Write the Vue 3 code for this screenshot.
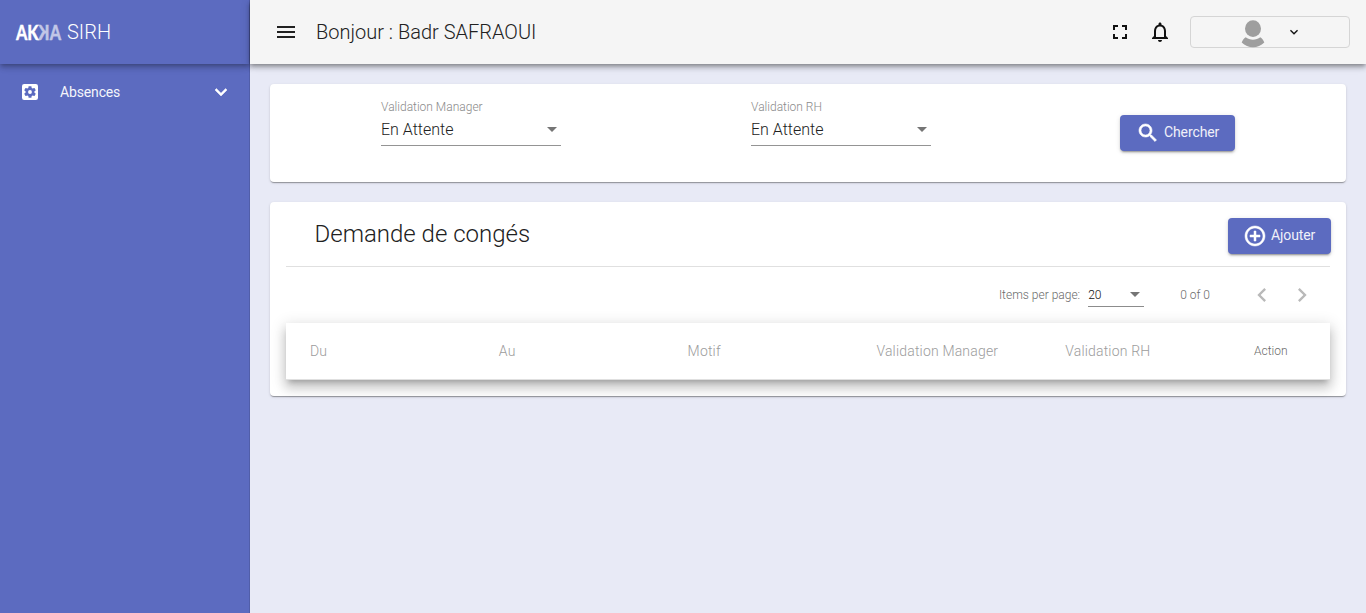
<script setup>
const filters = [
  { label: 'Validation Manager', value: 'En Attente' },
  { label: 'Validation RH', value: 'En Attente' },
]
const columns = ['Du', 'Au', 'Motif', 'Validation Manager', 'Validation RH', 'Action']
</script>

<template>
  <div class="app">
    <aside class="sidebar">
      <div class="brand">
        <span class="logo"><b>A</b><b>K</b><b class="faded flip">K</b><b class="faded">A</b></span>
        <span class="brand-name">SIRH</span>
      </div>
      <nav class="nav-item">
        <svg class="nav-icon" width="20" height="20" viewBox="0 0 24 24" fill="#fff">
          <rect x="2.400" y="2.400" width="19.200" height="19.200" rx="2.600" />
          <path fill="#5c6bc0" d="M17.250 12c0 .23-.02.46-.05.68l1.480 1.160c.13.11.17.3.08.45l-1.400 2.420c-.09.15-.27.21-.43.15l-1.740-.7c-.36.28-.76.51-1.180.69l-.26 1.850c-.03.17-.18.3-.35.3h-2.800c-.17 0-.32-.13-.35-.29l-.26-1.850c-.43-.18-.82-.41-1.180-.69l-1.740.7c-.16.06-.34 0-.43-.15l-1.400-2.420c-.09-.15-.05-.34.08-.45l1.480-1.160c-.03-.23-.05-.46-.05-.69s.02-.46.05-.68l-1.480-1.160c-.13-.11-.17-.3-.08-.45l1.400-2.420c.09-.15.27-.21.43-.15l1.740.7c.36-.28.76-.51 1.180-.69l.26-1.850c.03-.17.18-.3.35-.3h2.800c.17 0 .32.13.35.29l.26 1.850c.43.18.82.41 1.180.69l1.740-.7c.16-.06.34 0 .43.15l1.400 2.420c.09.15.05.34-.08.45l-1.480 1.160c.03.23.05.46.05.69z" />
          <circle cx="12" cy="12" r="2.300" />
        </svg>
        <span class="nav-label">Absences</span>
        <svg class="nav-chevron" width="24" height="24" viewBox="0 0 24 24" fill="#fff"><path d="M7.410 8.590L12 13.170l4.590-4.580L18 10l-6 6-6-6z" stroke="#fff" stroke-width=".5" /></svg>
      </nav>
    </aside>

    <div class="content">
      <header class="toolbar">
        <svg width="24" height="24" viewBox="0 0 24 24" fill="#212121"><path d="M3 18h18v-2H3v2zm0-5h18v-2H3v2zm0-7v2h18V6H3z" /></svg>
        <span class="greeting">Bonjour : Badr SAFRAOUI</span>
        <svg class="fullscreen" width="24" height="24" viewBox="0 0 24 24" fill="#111"><path d="M7 14H5v5h5v-2H7v-3zm-2-4h2V7h3V5H5v5zm12 7h-3v2h5v-5h-2v3zM14 5v2h3v3h2V5h-5z" /></svg>
        <svg class="bell" width="24" height="24" viewBox="0 0 24 24" fill="#111"><path d="M12 22c1.100 0 2-.9 2-2h-4c0 1.100.9 2 2 2zm6-6v-5c0-3.070-1.630-5.640-4.500-6.320V4c0-.83-.67-1.500-1.500-1.500s-1.500.67-1.500 1.500v.68C7.640 5.360 6 7.920 6 11v5l-2 2v1h16v-1l-2-2zm-2 1H8v-6c0-2.480 1.510-4.500 4-4.500s4 2.020 4 4.500v6z" /></svg>
        <button class="profile">
          <svg class="avatar" width="24" height="28" viewBox="0 0 24 28" fill="#9e9e9e">
            <ellipse cx="12" cy="8.600" rx="8" ry="8.400" />
            <path d="M4.700 17.200C8.600 20.500 15.400 20.500 19.300 17.200C21.200 18.500 22.500 20.200 23.300 22.400C17.200 28.700 6.800 28.700 .7 22.400C1.500 20.200 2.800 18.500 4.700 17.200z" />
          </svg>
          <svg class="caret" width="16" height="16" viewBox="0 0 24 24" fill="#111"><path d="M7.410 8.590L12 13.170l4.590-4.580L18 10l-6 6-6-6z" /></svg>
        </button>
      </header>

      <main class="main">
        <section class="card filters">
          <div v-for="f in filters" :key="f.label" class="field">
            <span class="field-label">{{ f.label }}</span>
            <div class="select"><span>{{ f.value }}</span><i class="arrow"></i></div>
          </div>
          <button class="btn search">
            <svg width="24" height="24" viewBox="0 0 24 24" fill="#fff"><path d="M15.500 14h-.79l-.28-.27C15.410 12.590 16 11.110 16 9.500 16 5.910 13.090 3 9.500 3S3 5.910 3 9.500 5.910 16 9.500 16c1.610 0 3.090-.59 4.230-1.570l.27.28v.79l5 4.990L20.490 19l-4.990-5zm-6 0C7.010 14 5 11.990 5 9.500S7.010 5 9.500 5 14 7.010 14 9.500 11.990 14 9.500 14z" stroke="#fff" stroke-width=".6" /></svg>
            <span>Chercher</span>
          </button>
        </section>

        <section class="card list">
          <div class="list-head">
            <h1>Demande de congés</h1>
            <button class="btn add">
              <svg width="24" height="24" viewBox="0 0 24 24" fill="#fff"><path d="M13 7h-2v4H7v2h4v4h2v-4h4v-2h-4V7zm-1-5C6.480 2 2 6.480 2 12s4.480 10 10 10 10-4.480 10-10S17.520 2 12 2zm0 18c-4.410 0-8-3.590-8-8s3.590-8 8-8 8 3.590 8 8-3.590 8-8 8z" stroke="#fff" stroke-width=".5" /></svg>
              <span>Ajouter</span>
            </button>
          </div>
          <div class="paginator">
            <span class="per-page">Items per page:</span>
            <div class="page-size"><span>20</span><i class="arrow"></i></div>
            <span class="range">0 of 0</span>
            <svg class="prev" width="28" height="28" viewBox="0 0 24 24" fill="#b9b9b9"><path d="M15.410 7.410L14 6l-6 6 6 6 1.410-1.410L10.830 12z" /></svg>
            <svg class="next" width="28" height="28" viewBox="0 0 24 24" fill="#b9b9b9"><path d="M10 6L8.590 7.410 13.170 12l-4.580 4.590L10 18l6-6z" /></svg>
          </div>
          <div class="table-head">
            <span v-for="c in columns" :key="c" :class="{ action: c === 'Action' }">{{ c }}</span>
          </div>
        </section>
      </main>
    </div>
  </div>
</template>

<style>
body { margin: 0; background: #e8eaf6; }
</style>

<style scoped>
* { box-sizing: border-box; }
.app {
  display: flex;
  height: 613px;
  overflow: hidden;
  font-family: Roboto, "Liberation Sans", sans-serif;
  font-weight: 300;
  color: #212121;
}
svg { display: block; flex: none; }
button { font: inherit; }
.sidebar {
  width: 250px;
  flex: none;
  background: #5c6bc0;
  border-right: 1px solid #515ea9;
  color: #fff;
}
.brand {
  display: flex;
  align-items: center;
  height: 64px;
  padding-left: 16px;
  box-shadow: 0 2px 4px -1px rgba(0,0,0,.2), 0 4px 5px rgba(0,0,0,.14), 0 1px 10px rgba(0,0,0,.12);
  font-size: 20px;
}
.logo {
  display: flex;
  width: 51px;
  font: 900 21px/24px Lato, sans-serif;
  transform: scaleX(.77);
  transform-origin: left;
}
.logo b { font-weight: 900; -webkit-text-stroke: .3px currentColor; }
.faded { opacity: .62; }
.flip { transform: scaleX(-1); }
.nav-item {
  display: flex;
  align-items: center;
  height: 56px;
  padding: 0 16px 0 20px;
  font-size: 14px;
  font-weight: 400;
}
.nav-label { margin-left: 20px; flex: 1; letter-spacing: -.15px; color: #f4f5fb; }
.content { flex: 1; min-width: 0; }
.toolbar {
  display: flex;
  align-items: center;
  height: 64px;
  padding: 0 16px 0 24px;
  background: #f5f5f5;
  box-shadow: 0 2px 4px -1px rgba(0,0,0,.3), 0 4px 5px rgba(0,0,0,.18), 0 1px 10px rgba(0,0,0,.12);
  font-size: 20px;
}
.greeting { margin-left: 18px; }
.fullscreen { margin-left: auto; }
.bell { margin: 0 18px 0 16px; }
.profile {
  display: flex;
  align-items: center;
  width: 160px;
  height: 32px;
  padding: 0 0 0 50px;
  border: 1px solid #d5d5d5;
  border-radius: 4px;
  background: transparent;
}
.avatar { margin-top: 3px; }
.caret { margin-left: 21px; }
.main { padding: 20px; display: grid; gap: 20px; }
.card {
  background: #fff;
  border-radius: 4px;
  box-shadow: 0 2px 1px -1px rgba(0,0,0,.2), 0 1px 1px rgba(0,0,0,.14), 0 1px 3px rgba(0,0,0,.12);
}
.filters {
  display: grid;
  grid-template-columns: 370px 369px auto;
  justify-items: start;
  align-items: start;
  height: 98px;
  padding-left: 111px;
}
.field { width: 180px; padding-top: 15px; }
.field-label { display: block; font-size: 12px; line-height: 16px; color: #8a8a8a; }
.select {
  display: flex;
  align-items: center;
  justify-content: space-between;
  height: 31px;
  padding: 0 4px 1px 0;
  border-bottom: 1px solid #949494;
  font-size: 16px;
}
.arrow {
  border: 5px solid transparent;
  border-top-color: #757575;
  border-bottom: 0;
}
.btn {
  display: flex;
  align-items: center;
  height: 36px;
  border: 0;
  border-radius: 4px;
  background: #5c6bc0;
  color: #fff;
  font-size: 14px;
  font-weight: 400;
  box-shadow: 0 3px 1px -2px rgba(0,0,0,.2), 0 2px 2px rgba(0,0,0,.14), 0 1px 5px rgba(0,0,0,.12);
}
.btn span { margin-top: -3px; letter-spacing: -.1px; color: #f0f1f9; }
.search { width: 115px; margin-top: 31px; padding: 0 0 0 16px; gap: 4px; }
.add { width: 103px; margin-right: -1px; padding: 0 0 0 15px; gap: 4px; }
.list { height: 194px; padding: 16px; }
.list-head {
  display: flex;
  justify-content: space-between;
  height: 49px;
  border-bottom: 1px solid #e0e0e0;
}
h1 { margin: 0 0 0 28.500px; font-size: 24px; line-height: 32px; font-weight: 300; }
.paginator {
  display: flex;
  align-items: center;
  height: 56px;
  padding-right: 14px;
  justify-content: flex-end;
  font-size: 12px;
  color: #6b6b6b;
}
.page-size {
  display: flex;
  align-items: center;
  justify-content: space-between;
  width: 56px;
  height: 24px;
  margin: 0 36px 0 8px;
  padding-right: 4px;
  border-bottom: 1px solid #8c8c8c;
  color: #111;
}
.prev { margin-left: 38px; }
.next { margin-left: 12px; }
.table-head {
  display: grid;
  grid-template-columns: repeat(5, 188.800px) 1fr;
  align-items: center;
  height: 57px;
  padding-left: 24px;
  background: #fff;
  border-bottom: 1px solid #e0e0e0;
  box-shadow: 0 5px 5px -3px rgba(0,0,0,.2), 0 8px 10px 1px rgba(0,0,0,.14), 0 3px 14px 2px rgba(0,0,0,.12);
  font-size: 14px;
  letter-spacing: .18px;
  color: #9c9c9c;
}
.table-head .action { font-size: 12px; letter-spacing: 0; color: #6b6b6b; }
</style>
